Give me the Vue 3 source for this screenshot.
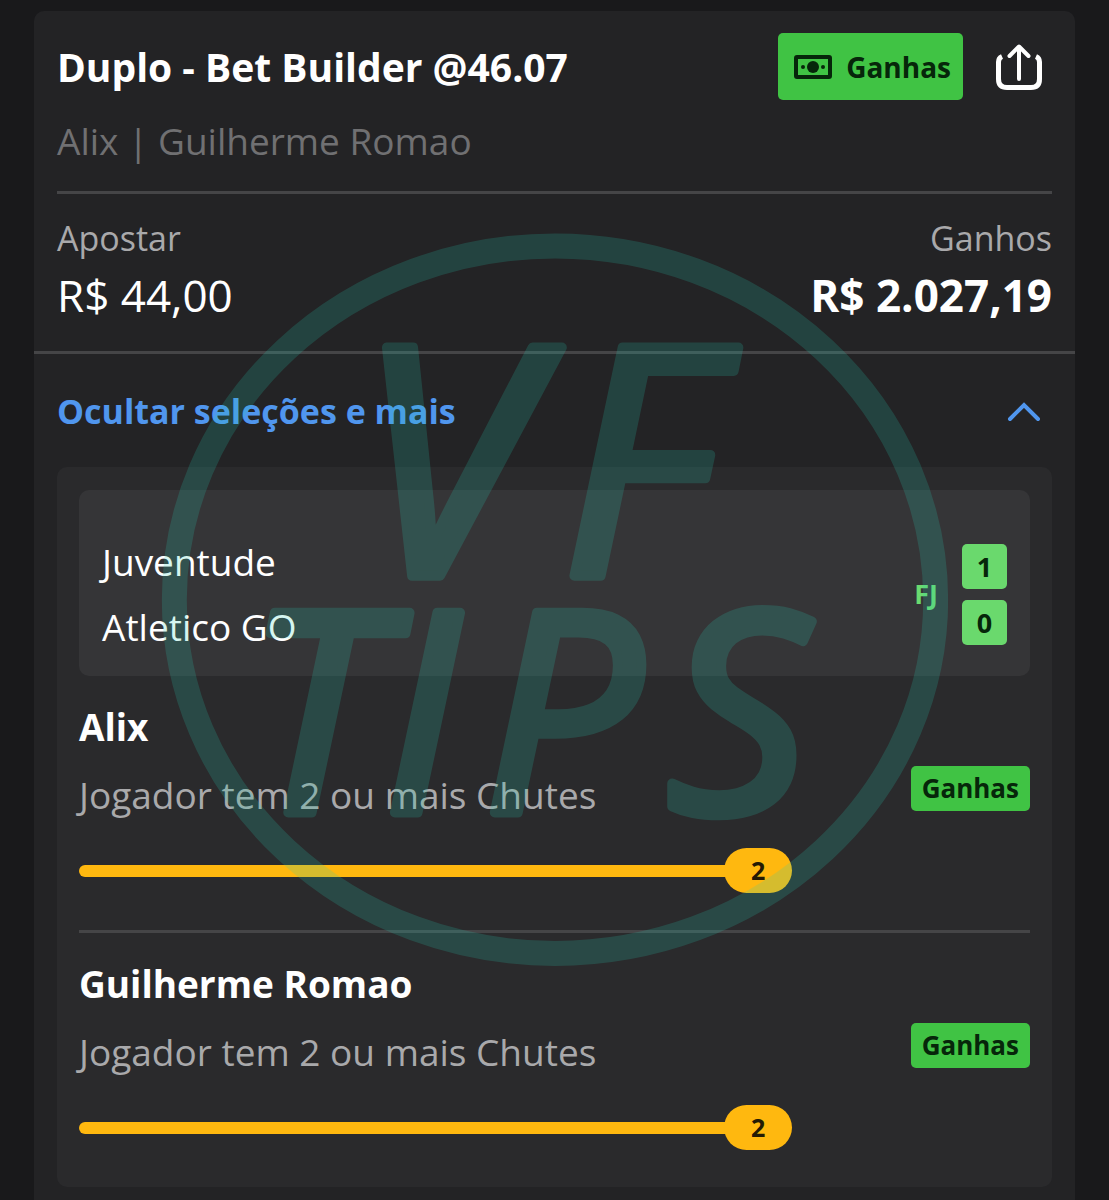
<script setup>
import { ref } from 'vue'

const isOpen = ref(true)

const bet = {
    title: 'Duplo - Bet Builder @46.07',
    players: 'Alix | Guilherme Romao',
    stake: 'R$ 44,00',
    returns: 'R$ 2.027,19'
}

const teams = [
    { name: 'Juventude', score: 1 },
    { name: 'Atletico GO', score: 0 }
]

const selections = [
    { player: 'Alix', market: 'Jogador tem 2 ou mais Chutes', value: 2, progress: 75 },
    { player: 'Guilherme Romao', market: 'Jogador tem 2 ou mais Chutes', value: 2, progress: 75 }
]
</script>

<template>
    <main class="page">
        <article class="bet-card">
            <section class="summary">
                <header class="bet-header">
                    <h1>{{ bet.title }}</h1>
                    <div class="status">
                        <svg width="38" height="24" viewBox="0 0 38 24" aria-hidden="true">
                            <rect x="2" y="2" width="34" height="20" rx="1" fill="none" stroke="currentColor" stroke-width="4" />
                            <circle cx="19" cy="12" r="6" fill="currentColor" />
                            <circle cx="9" cy="12" r="2" fill="currentColor" />
                            <circle cx="29" cy="12" r="2" fill="currentColor" />
                        </svg>
                        <span>Ganhas</span>
                    </div>
                    <button class="share" type="button" aria-label="Partilhar">
                        <svg width="48" height="48" viewBox="0 0 48 48" aria-hidden="true">
                            <g fill="none" stroke="currentColor" stroke-width="5" stroke-linejoin="round">
                                <path d="M7 13.500Q3.500 15 3.500 19V36Q3.500 44.500 12 44.500H36Q44.500 44.500 44.500 36V19Q44.500 15 41 13.500" />
                                <path d="M24 36V4M14.500 13L24 3.500L33.500 13" stroke-width="4" stroke-linecap="round" />
                            </g>
                        </svg>
                    </button>
                </header>
                <p class="players">{{ bet.players }}</p>
                <dl class="amounts">
                    <div>
                        <dt>Apostar</dt>
                        <dd>{{ bet.stake }}</dd>
                    </div>
                    <div class="returns">
                        <dt>Ganhos</dt>
                        <dd>{{ bet.returns }}</dd>
                    </div>
                </dl>
            </section>

            <button class="toggle" type="button" :aria-expanded="isOpen" @click="isOpen = !isOpen">
                <span>Ocultar seleções e mais</span>
                <svg :class="!isOpen && 'flipped'" width="34" height="22" viewBox="0 0 34 22" aria-hidden="true">
                    <path d="M3 19L17 5L31 19" fill="none" stroke="currentColor" stroke-width="4" stroke-linecap="round" />
                </svg>
            </button>

            <section v-if="isOpen" class="panel">
                <div class="game">
                    <div class="teams">
                        <p v-for="team in teams" :key="team.name">{{ team.name }}</p>
                    </div>
                    <span class="period">FJ</span>
                    <div class="scores">
                        <span v-for="team in teams" :key="team.name" class="score">{{ team.score }}</span>
                    </div>
                </div>

                <section v-for="item in selections" :key="item.player" class="selection">
                    <h2>{{ item.player }}</h2>
                    <div class="market">
                        <p>{{ item.market }}</p>
                        <span class="tag">Ganhas</span>
                    </div>
                    <div class="progress" :style="{ width: item.progress + '%' }">
                        <div class="line"></div>
                        <span class="pill">{{ item.value }}</span>
                    </div>
                </section>
            </section>
        </article>

        <!-- tipster watermark over the whole slip -->
        <svg class="watermark" viewBox="0 0 788 734" aria-hidden="true">
            <ellipse cx="394" cy="367" rx="381" ry="354" fill="none" stroke="#28cfb5" stroke-width="25" />
            <g class="brand">
                <text x="196 400" y="343" font-size="320">VF</text>
                <text x="84 222 322 506" y="580" font-size="280">TIPS</text>
            </g>
        </svg>
    </main>
</template>

<style>
body {
    margin: 0;
    background: #19191b;
}
</style>

<style scoped>
.page {
    position: relative;
    min-height: 100vh;
    box-sizing: border-box;
    padding: 11px 34px 0;
    background: #19191b;
    color: #ffffff;
    font-family: "Open Sans", "Noto Sans", sans-serif;
    font-size: 37px;
    line-height: 50px;
}

h1, h2, p, dl, dd {
    margin: 0;
}

button {
    border: 0;
    background: none;
    font: inherit;
    cursor: pointer;
}

svg {
    display: block;
    flex: none;
}

.bet-card {
    padding-bottom: 13px;
    border-radius: 10px 10px 0 0;
    background: #232325;
}

.summary {
    padding: 22px 23px 26px;
    border-bottom: 3px solid #454547;
}

.bet-header {
    display: flex;
    align-items: center;
    height: 67px;
}

h1 {
    flex: 1;
    font-size: 39px;
    font-weight: 700;
}

.status {
    display: flex;
    align-items: center;
    gap: 14px;
    height: 67px;
    padding: 0 12px 0 16px;
    border-radius: 5px;
    background: #40c344;
    color: #06260a;
    font-size: 28px;
    font-weight: 700;
}

.share {
    margin-left: 32px;
    margin-right: 9px;
    padding: 0;
    color: #ffffff;
}

.players {
    margin-top: 16px;
    padding-bottom: 25px;
    border-bottom: 3px solid #454547;
    color: #707072;
}

.amounts {
    display: flex;
    justify-content: space-between;
    margin-top: 20px;
}

dt {
    color: #a9a9ab;
    font-size: 34px;
    line-height: 48px;
}

dd {
    margin-top: 3px;
    font-size: 44px;
    line-height: 60px;
}

.returns {
    text-align: right;
}

.returns dd {
    font-weight: 700;
}

.toggle {
    display: flex;
    align-items: center;
    justify-content: space-between;
    width: 100%;
    height: 113px;
    padding: 0 34px 0 23px;
    color: #5096ee;
    font-size: 34px;
    font-weight: 700;
}

.flipped {
    transform: rotate(180deg);
}

.panel {
    margin: 0 23px;
    padding: 23px 22px 0;
    border-radius: 10px;
    background: #2a2a2c;
}

.game {
    display: flex;
    align-items: center;
    padding: 39px 23px 17px;
    border-radius: 10px;
    background: #353537;
}

.teams {
    flex: 1;
    line-height: 65px;
}

.period {
    margin-right: 24px;
    color: #6adb70;
    font-size: 27px;
    font-weight: 700;
}

.scores {
    display: flex;
    flex-direction: column;
    gap: 11px;
}

.score {
    width: 45px;
    border-radius: 5px;
    background: #6ad96d;
    color: #06260a;
    font-size: 27px;
    font-weight: 700;
    line-height: 45px;
    text-align: center;
}

.selection {
    padding: 27px 0 37px;
}

.selection + .selection {
    border-top: 3px solid #454547;
}

h2 {
    font-size: 37px;
    font-weight: 700;
    line-height: 48px;
}

.market {
    display: flex;
    align-items: flex-start;
    justify-content: space-between;
    margin-top: 15px;
}

.market p {
    padding-top: 4px;
    color: #a9a9ab;
}

.tag {
    padding: 0 11px;
    border-radius: 5px;
    background: #40c344;
    color: #06260a;
    font-size: 26px;
    font-weight: 700;
    line-height: 45px;
}

.progress {
    display: flex;
    align-items: center;
    margin-top: 28px;
}

.line {
    flex: 1;
    height: 12px;
    margin-right: -2px;
    border-radius: 6px 0 0 6px;
    background: #ffb80f;
}

.pill {
    width: 68px;
    border-radius: 23px;
    background: #ffb80f;
    color: #241a04;
    font-size: 25px;
    font-weight: 700;
    line-height: 45px;
    text-align: center;
}

.watermark {
    position: absolute;
    top: 233px;
    left: 50%;
    width: 71%;
    transform: translateX(-50%);
    opacity: 0.19;
    pointer-events: none;
}

.brand {
    fill: #28cfb5;
    stroke: #28cfb5;
    stroke-width: 10px;
    stroke-linejoin: round;
    font-style: italic;
}
</style>
